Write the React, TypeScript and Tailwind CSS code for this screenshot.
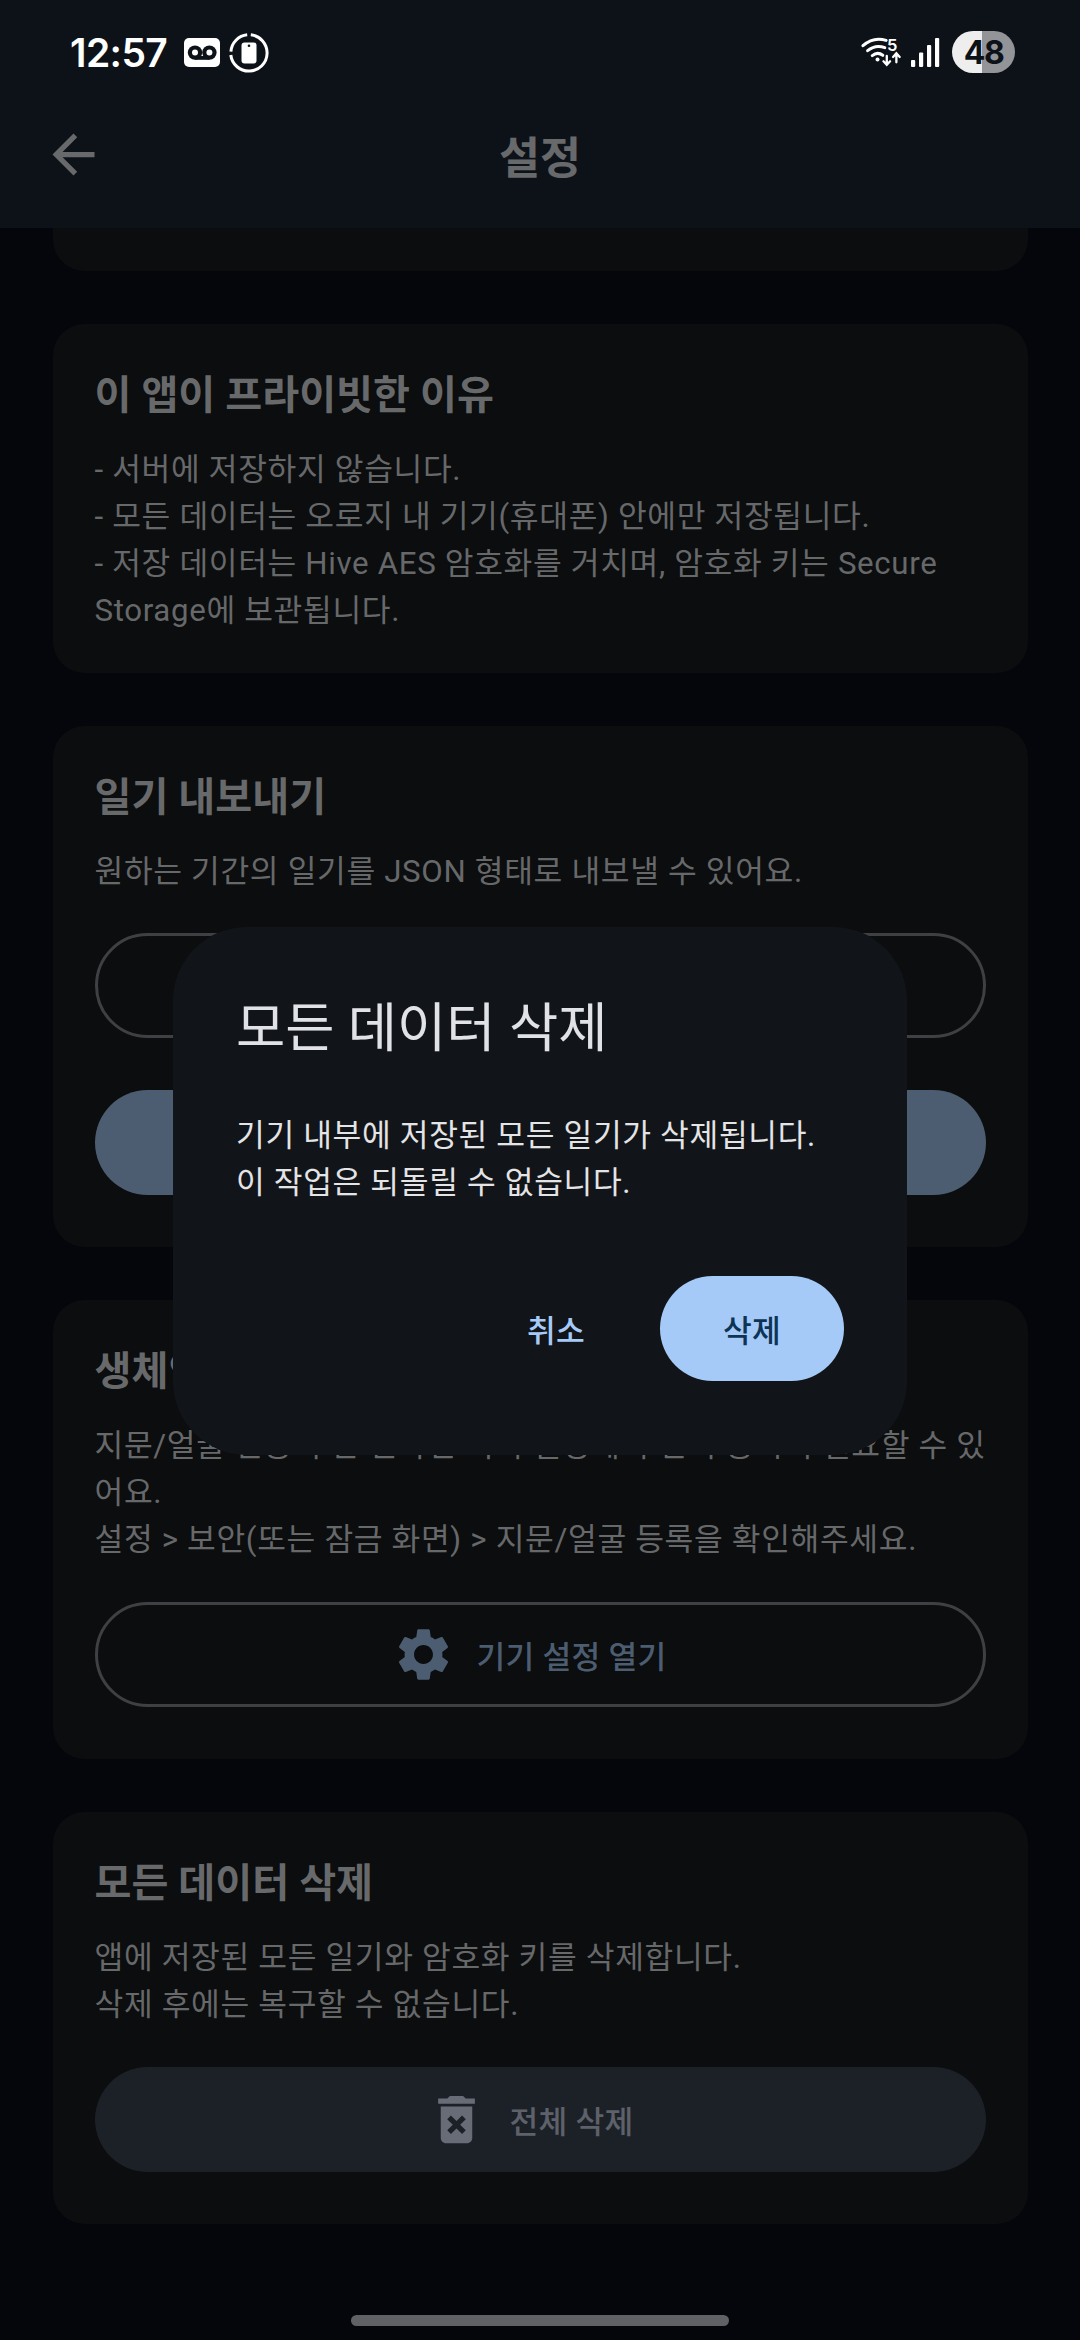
import type { ReactNode } from "react";
import clsx from "clsx";
import { MdArrowBack, MdDeleteForever, MdSettings } from "react-icons/md";

type SettingsCardProps = {
  title: string;
  lines: string[];
  children?: ReactNode;
};

type PillButtonProps = {
  label?: string;
  ariaLabel?: string;
  icon?: ReactNode;
  variant: "outlined" | "filled" | "tonal";
};

function VoicemailIcon() {
  return (
    <svg width="36" height="29" viewBox="0 0 36 29">
      <rect width="36" height="29" rx="5" fill="#fff" />
      <circle cx="11" cy="14.6" r="7.2" fill="#0d1219" />
      <circle cx="25.4" cy="14.6" r="7.2" fill="#0d1219" />
      <rect x="11" y="18" width="14.4" height="3.8" fill="#0d1219" />
      <circle cx="11" cy="14.6" r="3" fill="#fff" />
      <circle cx="25.4" cy="14.6" r="3" fill="#fff" />
    </svg>
  );
}

function DeviceCareIcon() {
  return (
    <svg width="40" height="40" viewBox="0 0 40 40" fill="none">
      <path d="M21.8 1.8A18.2 18.2 0 1 1 1.8 22" stroke="#fff" strokeWidth="3" />
      <path d="M1.9 18.6A18.2 18.2 0 0 1 18.2 1.8" stroke="#fff" strokeWidth="3" />
      <rect x="12.5" y="9.5" width="15" height="21" rx="3" fill="#fff" />
      <circle cx="20" cy="12.8" r="1.3" fill="#0d1219" />
    </svg>
  );
}

function WifiIcon() {
  return (
    <svg width="42" height="32" viewBox="18 35 127 96" fill="none" stroke="#fff" strokeLinecap="round">
      <path d="M27 64Q58 36 97 48" strokeWidth="9" />
      <path d="M41 79Q65 59 93 70" strokeWidth="9" />
      <path d="M55 94Q71 81 87 93" strokeWidth="9" />
      <circle cx="71" cy="106" r="6" fill="#fff" stroke="none" />
      <path d="M99 95V118M89 111L99 122L109 111" strokeWidth="7" />
      <path d="M128 114V90M118 98L128 87L138 98" strokeWidth="7" />
      <text
        x="100"
        y="79"
        fill="#fff"
        stroke="none"
        className="font-['Inter'] text-[50px] font-semibold"
      >
        5
      </text>
    </svg>
  );
}

function SignalIcon() {
  return (
    <svg width="29" height="30" viewBox="0 0 29 30" fill="#fff">
      <rect x="0" y="23" width="4.2" height="7" rx="1" />
      <rect x="8" y="15.5" width="4.2" height="14.5" rx="1" />
      <rect x="16" y="8" width="4.2" height="22" rx="1" />
      <rect x="24" y="1" width="4.2" height="29" rx="1" />
    </svg>
  );
}

function StatusBar() {
  return (
    <div className="flex h-[81px] items-start justify-between pr-[65px] pl-[70px] font-['Inter',sans-serif]">
      <div className="flex h-[105px] items-center">
        <span className="w-[114px] text-[39px] leading-none font-semibold tracking-[-0.6px] text-white">
          12:57
        </span>
        <VoicemailIcon />
        <div className="w-[9px]" />
        <DeviceCareIcon />
      </div>
      <div className="flex h-[104px] items-center">
        <WifiIcon />
        <div className="w-[9px]" />
        <SignalIcon />
        <div className="ml-3 flex h-[42px] w-[63px] items-center justify-center rounded-full bg-[linear-gradient(90deg,#eeeeee_30px,#939498_30px)] pt-px text-[32px] leading-none font-bold tracking-[-1.5px] text-[#0d1219]">
          48
        </div>
      </div>
    </div>
  );
}

function PillButton({ label, ariaLabel, icon, variant }: PillButtonProps) {
  return (
    <div className="flex h-[125.6px] items-center">
      <button
        aria-label={ariaLabel}
        className={clsx(
          "flex h-[105px] w-full items-center justify-center gap-[21px] rounded-full pr-[63px] pl-[42px] text-[31.24px] font-medium tracking-[0.26px]",
          variant === "outlined" && "border-[3px] border-[#3f4043] text-[#4c5d71]",
          variant === "filled" && "bg-[#4c5d71]",
          variant === "tonal" && "bg-[#1c2128] text-[#5e616a]",
        )}
      >
        {icon}
        {label && <span className="pt-[8px]">{label}</span>}
      </button>
    </div>
  );
}

function SettingsCard({ title, lines, children }: SettingsCardProps) {
  return (
    <section className="rounded-[31.5px] bg-[#0b0d0e] p-[42px]">
      <h2 className="h-[55.5px] text-[40.16px] leading-[60.5px] font-bold text-[#68696b]">{title}</h2>
      <div className="mt-[24.5px] -mr-[6px] -mb-[3.5px] text-[31.24px] leading-[47.25px] tracking-[0.656px] text-[#67686a]">
        {lines.map((line) => (
          <p key={line}>{line}</p>
        ))}
      </div>
      {children && <div className="mt-[31.5px] flex flex-col gap-[31.5px]">{children}</div>}
    </section>
  );
}

function DeleteDialog() {
  return (
    <div className="absolute inset-0 flex items-center justify-center pt-[81px] pb-[40px]">
      <div className="w-[734px] rounded-[73.5px] bg-[#111418] p-[63px]">
        <h1 className="h-[77px] text-[53.55px] leading-[78px] text-[#e1e2e8]">모든 데이터 삭제</h1>
        <div className="mt-[45px] -mb-[3px] text-[31.24px] leading-[47px] tracking-[0.656px] text-[#e4e4e6]">
          <p>기기 내부에 저장된 모든 일기가 삭제됩니다.</p>
          <p>이 작업은 되돌릴 수 없습니다.</p>
        </div>
        <div className="mt-[63px] flex h-[126px] items-center justify-end gap-[21px] text-[31.24px] font-medium tracking-[0.26px]">
          <button className="h-[105px] px-[54px] pt-[8px] text-[#a6caf7]">취소</button>
          <button className="h-[105px] rounded-full bg-[#a6caf7] px-[63px] pt-[8px] text-[#0d3355]">
            삭제
          </button>
        </div>
      </div>
    </div>
  );
}

export default function App() {
  return (
    <div className="relative flex h-[2340px] w-[1080px] flex-col overflow-hidden bg-[#04060b] font-['Roboto','Noto_Sans_CJK_KR',sans-serif]">
      <header className="h-[228px] shrink-0 bg-[#0d1219]">
        <StatusBar />
        <div className="grid h-[147px] grid-cols-[1fr_auto_1fr] items-center px-[42px]">
          <MdArrowBack className="size-[63px] text-[#68696b]" />
          <span className="pt-[9px] text-[44.6px] leading-none font-bold text-[#68696b]">설정</span>
        </div>
      </header>

      <main className="flex flex-1 flex-col gap-[52.5px] px-[52.5px]">
        {/* tail of the card scrolled under the app bar */}
        <div className="h-[43px] shrink-0 rounded-b-[31.5px] bg-[#0b0d0e]" />

        <SettingsCard
          title="이 앱이 프라이빗한 이유"
          lines={[
            "- 서버에 저장하지 않습니다.",
            "- 모든 데이터는 오로지 내 기기(휴대폰) 안에만 저장됩니다.",
            "- 저장 데이터는 Hive AES 암호화를 거치며, 암호화 키는 Secure Storage에 보관됩니다.",
          ]}
        />

        <SettingsCard
          title="일기 내보내기"
          lines={["원하는 기간의 일기를 JSON 형태로 내보낼 수 있어요."]}
        >
          <PillButton variant="outlined" ariaLabel="기간 선택" />
          <PillButton variant="filled" ariaLabel="내보내기" />
        </SettingsCard>

        <SettingsCard
          title="생체인증 설정"
          lines={[
            "지문/얼굴 인증이 안 된다면 기기 설정에서 먼저 등록이 필요할 수 있어요.",
            "설정 > 보안(또는 잠금 화면) > 지문/얼굴 등록을 확인해주세요.",
          ]}
        >
          <PillButton
            variant="outlined"
            label="기기 설정 열기"
            icon={<MdSettings className="size-[63px]" />}
          />
        </SettingsCard>

        <SettingsCard
          title="모든 데이터 삭제"
          lines={["앱에 저장된 모든 일기와 암호화 키를 삭제합니다.", "삭제 후에는 복구할 수 없습니다."]}
        >
          <PillButton
            variant="tonal"
            label="전체 삭제"
            icon={<MdDeleteForever className="size-[63px] text-[#676c76]" />}
          />
        </SettingsCard>
      </main>

      <DeleteDialog />

      <div className="absolute bottom-[14px] left-1/2 h-[11px] w-[378px] -translate-x-1/2 rounded-full bg-[#606164]" />
    </div>
  );
}
